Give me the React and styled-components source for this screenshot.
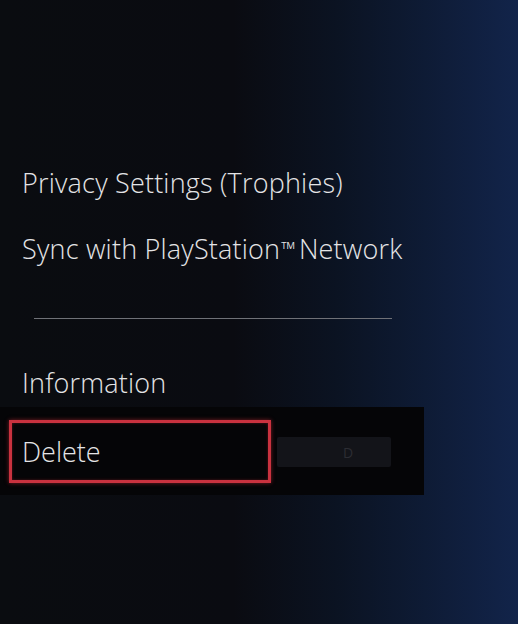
import React from 'react';
import styled, { createGlobalStyle } from 'styled-components';

const Global = createGlobalStyle`
  html, body { margin: 0; padding: 0; }
  body { background: #0a0b10; }
`;

const Screen = styled.main`
  width: 518px;
  height: 624px;
  box-sizing: border-box;
  padding-top: 149px;
  background: linear-gradient(90deg, #0a0c10 0%, #0a0b11 45%, #0b1322 65%, #0e1b35 82%, #12244a 100%);
  font-family: "Open Sans", "Noto Sans", sans-serif;
  color: #e4e4e6;
  overflow: hidden;
`;

const Menu = styled.ul`
  list-style: none;
  margin: 0;
  padding: 0;
  display: flex;
  flex-direction: column;
`;

const Item = styled.li`
  height: ${p => p.$h || 66}px;
  display: flex;
  align-items: center;
  padding-left: 22px;
  font-size: 27px;
  font-weight: 300;
  letter-spacing: 0.2px;
  white-space: nowrap;
`;

const Tm = styled.span`
  font-size: 20px;
  vertical-align: 6px;
  margin: 0 3px 0 1px;
`;

const Divider = styled.li`
  height: 1px;
  margin: 37px 126px 37px 34px;
  background: #6f7177;
`;

const SelectedRow = styled.li`
  width: 424px;
  height: 88px;
  margin-top: -1px;
  box-sizing: border-box;
  padding-left: 9px;
  display: flex;
  align-items: center;
  background: #050507;
`;

const Marked = styled.div`
  width: 262px;
  height: 63px;
  box-sizing: border-box;
  border: 3px solid #c9323f;
  box-shadow: 0 0 4px rgba(220, 50, 60, 0.55), inset 0 0 3px rgba(220, 50, 60, 0.35);
  padding-left: 10px;
  display: flex;
  align-items: center;
  font-size: 27px;
  font-weight: 300;
`;

const Ghost = styled.div`
  width: 114px;
  height: 30px;
  margin-left: 6px;
  margin-top: 2px;
  background: #131419;
  border-radius: 2px;
  display: flex;
  align-items: center;
  justify-content: center;
  color: #2c2d33;
  font-size: 14px;
  padding-left: 28px;
  box-sizing: border-box;
`;

export default function App() {
  return (
    <>
      <Global />
      <Screen>
        <Menu>
          <Item>Privacy Settings (Trophies)</Item>
          <Item>
            Sync with PlayStation<Tm>™</Tm>Network
          </Item>
          <Divider />
          <Item $h={52}>Information</Item>
          <SelectedRow>
            <Marked>Delete</Marked>
            <Ghost>D</Ghost>
          </SelectedRow>
        </Menu>
      </Screen>
    </>
  );
}
